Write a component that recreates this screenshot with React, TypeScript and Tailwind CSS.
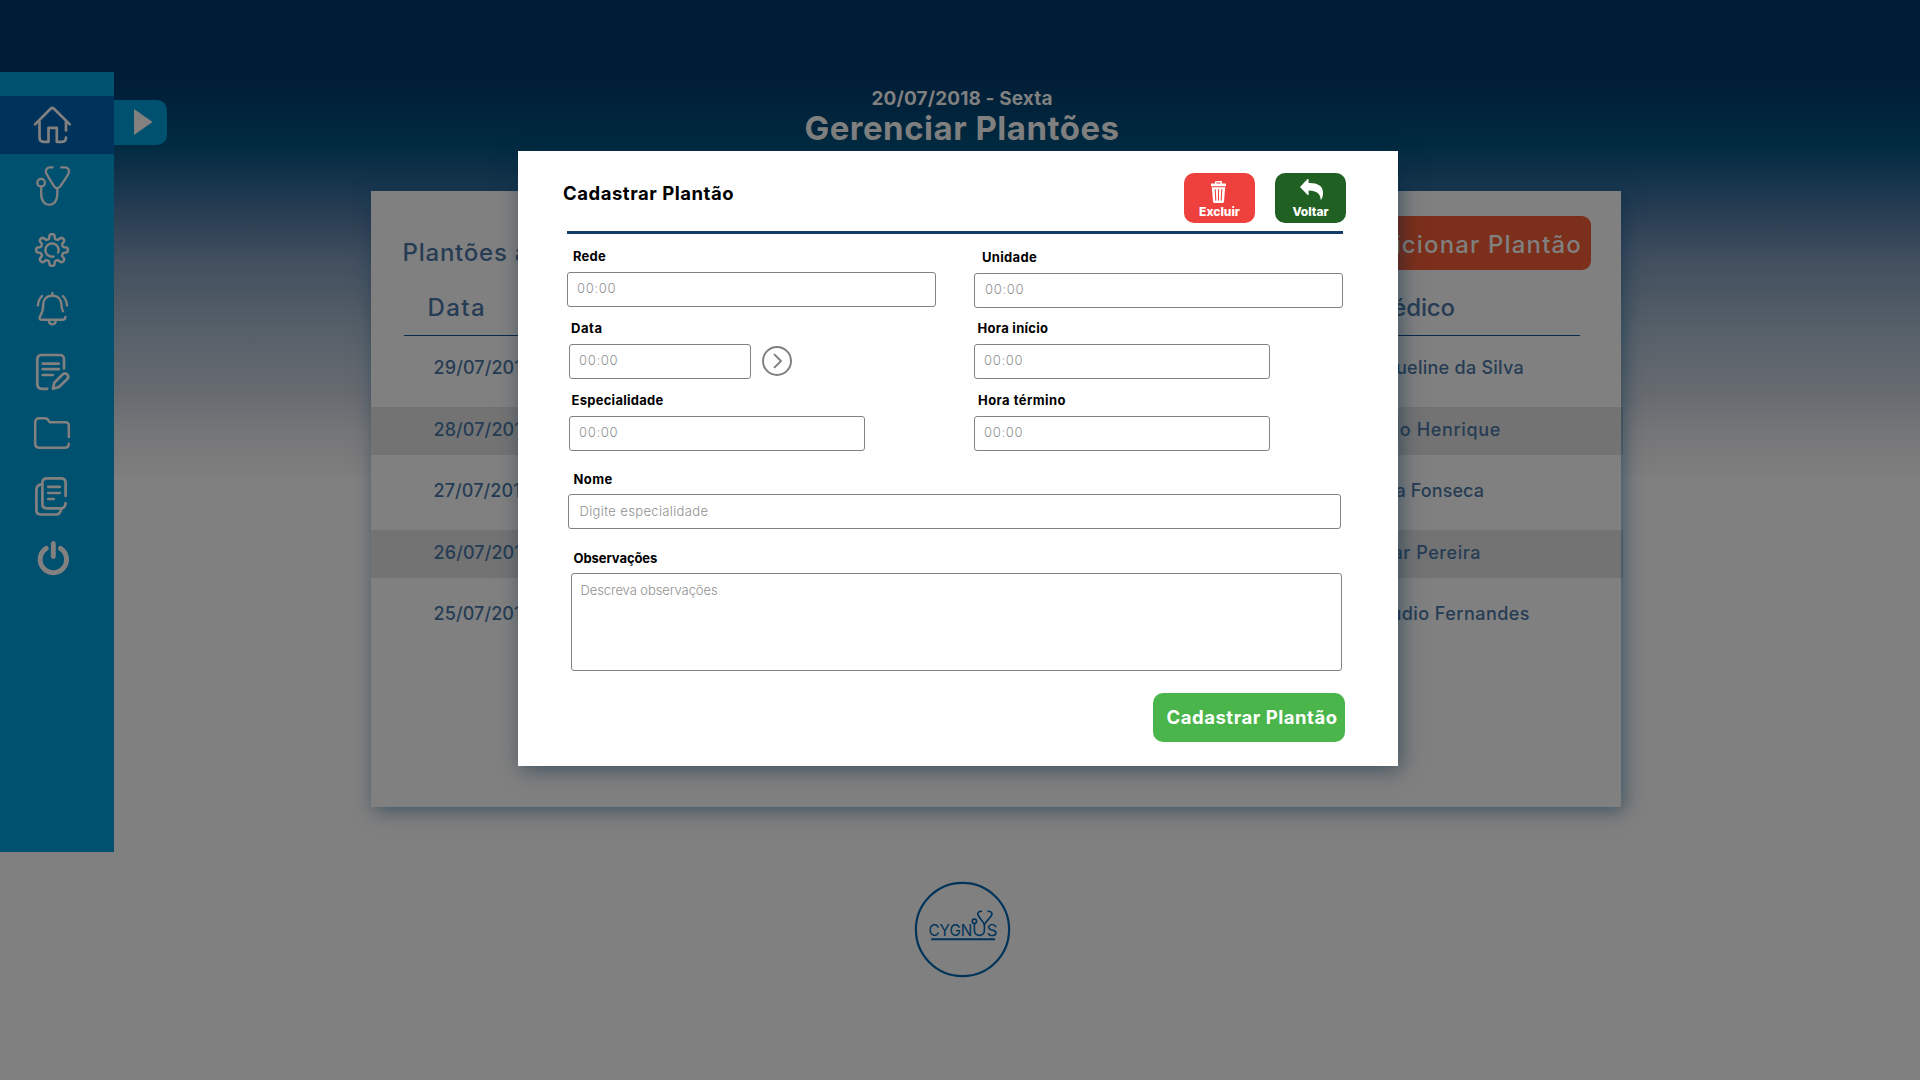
import React from "react";

/* Outline of the eight-toothed gear, centred on (52, 250). */
const gearPath = (() => {
  const pts: string[] = [];
  for (let i = 0; i < 240; i++) {
    const a = (i / 240) * Math.PI * 2;
    const r = 13.6 + 2.3 * Math.tanh(2.2 * Math.cos(8 * a));
    pts.push(`${(52 + r * Math.sin(a)).toFixed(2)} ${(250 - r * Math.cos(a)).toFixed(2)}`);
  }
  return `M${pts.join("L")}Z`;
})();

type NavItem = { id: string; viewBox: string; width: number; paths: string[]; active?: boolean };

const nav: NavItem[] = [
  {
    id: "home",
    viewBox: "32 96 42 58",
    width: 2.7,
    active: true,
    paths: [
      "M35 124.4L50.6 108.8Q52.3 107.2 54 108.8L69.8 124.4",
      "M39.5 122V137.5Q39.5 141.8 43.8 141.8H48.5V127.8H56.8V141.8H62Q66 141.8 66 137.5",
      "M66 122V130.5",
    ],
  },
  {
    id: "stethoscope",
    viewBox: "32 154 42 62",
    width: 2.3,
    paths: [
      "M44.9 182.7A3.8 3.8 0 1 1 37.3 182.7A3.8 3.8 0 1 1 44.9 182.7",
      "M41.2 186.5V194C41.2 208.6 57.3 208.6 57.3 194V188.5",
      "M52.6 167.4H50Q45.4 167.8 46 172.5C46.8 175 51.8 182.6 54.2 186.4Q57.3 190 60.2 186.4C62.8 182.6 68.2 175 68.9 172.5Q69.6 167.8 65 167.4H61.2",
    ],
  },
  {
    id: "settings",
    viewBox: "32 216 42 62",
    width: 2.5,
    paths: [gearPath, "M53.6 256.4A6.6 6.6 0 1 1 58.1 252.4"],
  },
  {
    id: "alerts",
    viewBox: "32 278 42 62",
    width: 2.4,
    paths: [
      "M52.3 293V295.8C46 295.8 43.2 300 43.2 305C43.2 311 41.7 313.8 40 316.6Q38.6 319.8 41.5 319.8H62.3Q65.4 319.8 65.4 317",
      "M52.3 295.8C58.5 295.8 61.4 300 61.4 304.5Q61.4 308.3 63 311.3",
      "M48.9 321Q49.5 324.4 52.3 324.4Q55.2 324.4 55.8 321",
      "M42 296Q38.3 299.6 38 305.5",
      "M62.8 296Q66.6 299.6 66.9 305.5",
    ],
  },
  {
    id: "notes",
    viewBox: "32 340 42 62",
    width: 2.7,
    paths: [
      "M64 368.5V359.6Q64 355 59.5 355H42Q37.3 355 37.3 359.6V384Q37.3 388.8 42 388.8H47.2",
      "M42.7 363.6H58.8M42.7 369.2H58.8M42.7 375H52.8",
      "M53 388.6L54.3 382.8L62.8 374.3Q65.2 372.4 67.3 374.5Q69.2 376.8 67.3 379L58.6 387.2Z",
    ],
  },
  {
    id: "folder",
    viewBox: "32 402 42 62",
    width: 2.5,
    paths: [
      "M68.8 437V425.5Q68.8 422.2 65.5 422.2H50.2Q49 422.2 48.5 420.5Q47.5 418.2 44.5 418.2H39.5Q35.2 418.2 35.2 422.5V443.5Q35.2 447.8 39.5 447.8H64.8Q68.8 447.8 68.8 443.8",
    ],
  },
  {
    id: "files",
    viewBox: "32 464 42 62",
    width: 2.7,
    paths: [
      "M65.6 496V482.8Q65.6 478.4 61 478.4H47Q42.4 478.4 42.4 482.8V504Q42.4 508.4 47 508.4H61Q65.2 508.4 65.6 503.2",
      "M42 484.3Q36.4 484.6 36.4 490V510Q36.4 514.5 41 514.5H56Q60.2 514.5 61 509.5",
      "M48.2 486.8H59.8M48.2 493H59.8M48.2 499H53.8",
    ],
  },
  {
    id: "power",
    viewBox: "32 526 42 62",
    width: 4.9,
    paths: ["M46.2 548.4A13.2 13.2 0 1 0 60.5 548.4", "M53.3 543.4V556.6"],
  },
];

const shifts = [
  { date: "29/07/2018", name: "Jaqueline da Silva", cell: "pr-[99px] tracking-[0.26px]" },
  { date: "28/07/2018", name: "Paulo Henrique", cell: "pr-[122px] tracking-[0.65px]" },
  { date: "27/07/2018", name: "Paula Fonseca", cell: "pr-[139px] tracking-[0.08px]" },
  { date: "26/07/2018", name: "Itamar Pereira", cell: "pr-[142px] tracking-[0.56px]" },
  { date: "25/07/2018", name: "Cláudio Fernandes", cell: "pr-[93px] tracking-[0.46px]" },
];

function Sidebar() {
  return (
    <aside className="mt-[72px] flex h-[780px] w-[114px] shrink-0 flex-col bg-[#005070] pt-6">
      {nav.map((item) => (
        <a key={item.id} className={item.active ? "block h-[58px] bg-[#00335b]" : "block h-[62px]"}>
          <svg
            viewBox={item.viewBox}
            className={item.active ? "ml-8 h-[58px] w-[42px]" : "ml-8 h-[62px] w-[42px]"}
            fill="none"
            stroke="#838080"
            strokeWidth={item.width}
            strokeLinecap="round"
            strokeLinejoin="round"
          >
            {item.paths.map((d) => (
              <path key={d} d={d} />
            ))}
          </svg>
        </a>
      ))}
    </aside>
  );
}

function Field({
  label,
  value,
  className,
  labelClass,
  inputClass,
  children,
}: {
  label: string;
  value: string;
  className: string;
  labelClass: string;
  inputClass: string;
  children?: React.ReactNode;
}) {
  return (
    <div className={className}>
      <div className={`h-5 text-[13px] leading-[19px] font-bold text-black ${labelClass}`}>{label}</div>
      <div className="mt-[5px] flex items-start">
        <div
          className={`flex rounded-[3px] border border-[#828282] text-[13px] leading-4 font-light text-[#8f8f8f] ${inputClass}`}
        >
          {value}
        </div>
        {children}
      </div>
    </div>
  );
}

function Modal() {
  return (
    <section className="absolute top-[151px] left-[518px] flex h-[615px] w-[880px] flex-col bg-white shadow-[3px_4px_20px_rgba(0,38,62,0.5)]">
      <header className="flex h-20 shrink-0 items-start">
        <h2 className="mt-[30px] ml-[45px] text-[18.5px] leading-[25px] font-bold tracking-[0.53px] text-black">
          Cadastrar Plantão
        </h2>
        <div className="mt-[22px] mr-[52px] ml-auto flex gap-5">
          <button className="flex h-[50px] w-[71px] flex-col items-center rounded-[10px] bg-[#ee403d]">
            <svg viewBox="1205 173 30 32" className="h-8 w-[30px]" fill="#fff">
              <path
                fillRule="evenodd"
                d="M1215 183.5V182Q1215 181 1216 181H1221Q1222 181 1222 182V183.5H1226V186.2H1211V183.5ZM1216.4 183.5H1220.6V182.4H1216.4Z"
              />
              <path d="M1211.8 187.2H1225.2L1224 201.4Q1223.8 203 1222.4 203H1214.6Q1213.2 203 1213 201.4Z" />
              <path
                d="M1215.2 189.2L1215.8 200.6M1218.5 189.2V200.6M1221.8 189.2L1221.2 200.6"
                stroke="#ee403d"
                strokeWidth="1.1"
              />
            </svg>
            <span className="text-[12px] leading-[13px] font-extrabold text-white">Excluir</span>
          </button>
          <button className="flex h-[50px] w-[71px] flex-col items-center rounded-[10px] bg-[#216023]">
            <svg viewBox="1296 173 30 32" className="h-8 w-[30px]" fill="#fff">
              <path d="M1300 187L1307.2 179.3Q1308.6 178.2 1308.6 180V183C1318 182.8 1323 186 1323 193C1323 196 1322.2 198.5 1320.8 200C1320.4 194 1317 190.7 1308.6 190.6V194Q1308.6 196 1307.2 194.6Z" />
            </svg>
            <span className="text-[12px] leading-[13px] font-extrabold text-white">Voltar</span>
          </button>
        </div>
      </header>
      <div className="ml-[49px] h-[3px] w-[776px] shrink-0 bg-[#143c66]" />

      <div className="flex">
        <div className="w-[456px] pl-[49px]">
          <Field
            label="Rede"
            value="00:00"
            className="pt-[13px]"
            labelClass="pl-[6px] tracking-[0.23px]"
            inputClass="h-[35px] w-[369px] pt-[7px] pl-[9px] tracking-[0.69px]"
          />
          <Field
            label="Data"
            value="00:00"
            className="pt-3 pl-[2px]"
            labelClass="pl-[2px] tracking-[0.58px]"
            inputClass="h-[35px] w-[182px] pt-[7px] pl-[9px] tracking-[0.69px]"
          >
            <svg
              viewBox="0 0 30 30"
              className="mt-[2px] -mb-1 ml-[11px] size-[30px]"
              fill="none"
              stroke="#808080"
              strokeWidth="2"
              strokeLinecap="round"
              strokeLinejoin="round"
            >
              <circle cx="15" cy="15" r="14" />
              <path d="M12.6 8.6L19 15L12.6 21.4" />
            </svg>
          </Field>
          <Field
            label="Especialidade"
            value="00:00"
            className="pt-3 pl-[2px]"
            labelClass="pl-[2.5px] tracking-[0.27px]"
            inputClass="h-[35px] w-[296px] pt-[7px] pl-[9px] tracking-[0.69px]"
          />
        </div>
        <div>
          <Field
            label="Unidade"
            value="00:00"
            className="pt-[14px]"
            labelClass="pl-[8px] tracking-[0.32px]"
            inputClass="h-[35px] w-[369px] pt-[7px] pl-[10px] tracking-[0.69px]"
          />
          <Field
            label="Hora início"
            value="00:00"
            className="pt-[11px]"
            labelClass="pl-[3.5px] tracking-[0.28px]"
            inputClass="h-[35px] w-[296px] pt-[7px] pl-[9px] tracking-[0.69px]"
          />
          <Field
            label="Hora término"
            value="00:00"
            className="pt-3"
            labelClass="pl-[4px] tracking-[0.44px]"
            inputClass="h-[35px] w-[296px] pt-[7px] pl-[9px] tracking-[0.69px]"
          />
        </div>
      </div>
      <Field
        label="Nome"
        value="Digite especialidade"
        className="pt-[18px] pl-[50px]"
        labelClass="pl-[5.5px] pt-px tracking-[0.42px]"
        inputClass="h-[35px] w-[773px] pt-2 pl-[10.5px] tracking-[0.36px]"
      />
      <Field
        label="Observações"
        value="Descreva observações"
        className="pt-[19px] pl-[53px]"
        labelClass="pl-[2.5px] pt-px tracking-[-0.08px]"
        inputClass="h-[98px] w-[771px] pt-2 pl-[8.5px] tracking-[-0.08px]"
      />
      <button className="mt-[22px] mr-[53px] flex h-[49px] w-[192px] items-center self-end rounded-[10px] bg-[#4ab54b] pt-px pl-[13.5px] text-[18.5px] font-bold tracking-[0.53px] whitespace-nowrap text-white">
        Cadastrar Plantão
      </button>
    </section>
  );
}

export default function App() {
  return (
    <div className="relative flex h-[1080px] w-[1920px] overflow-hidden bg-[#808080] bg-[linear-gradient(to_bottom,#001c37_0px,#001d37_80px,#00233b_110px,#002a40_145px,#0c2f46_165px,#1b3850_193px,#2d4054_220px,#414f5f_260px,#4b5762_293px,#566069_330px,#676b70_395px,#747577_430px,#7e7e7e_475px,#808080_476px)] font-['Inter',sans-serif]">
      <Sidebar />
      <button className="mt-[100px] flex h-[45px] w-[53px] shrink-0 items-center rounded-r-[10px] bg-[#005070] pl-5">
        <svg viewBox="0 0 19 26" className="mb-px h-[26px] w-[19px]" fill="#838080">
          <path d="M0 0L18.6 13L0 26Z" />
        </svg>
      </button>

      <main className="ml-[204px] w-[1252px]">
        <header className="h-[191px] w-[1182px] pt-[86px] text-center font-bold text-[#808080]">
          <p className="text-[19px] leading-[25px] tracking-[0.12px]">20/07/2018 - Sexta</p>
          <h1 className="text-[33px] leading-[34px] tracking-[0.5px]">Gerenciar Plantões</h1>
        </header>

        <section className="h-[616px] w-[1250px] bg-[#808080] pt-[25px] text-[#263c54] shadow-[3px_4px_18px_rgba(0,42,72,0.5)]">
          <div className="flex h-[54px] justify-between pr-[30px] pl-[31.5px]">
            <h2 className="mt-[25px] text-[24px] leading-6 font-medium tracking-[0.77px]">
              Plantões abertos
            </h2>
            <button className="flex h-[54px] w-[266px] items-center justify-end rounded-[9px] bg-[#7c2f1a] pt-[3px] pr-[9px] text-[24px] font-medium tracking-[1.15px] text-[#808080]">
              Adicionar Plantão
            </button>
          </div>
          <div className="mr-[41px] ml-[33px] flex h-[66px] items-center justify-between border-b border-[#0a2848] pt-[11px] pr-[125px] pl-[23.5px] text-[24px] font-medium">
            <span className="tracking-[1.4px]">Data</span>
            <span className="tracking-[-0.1px]">Médico</span>
          </div>
          <div className="mt-[9.5px] flex w-[1252px] flex-col gap-[13.5px]">
            {shifts.map((s, i) => (
              <div
                key={s.date}
                className={`flex h-12 items-center justify-between pb-[3.5px] pl-[62.5px] text-[18px] font-medium ${
                  i % 2 ? "bg-black/10" : ""
                }`}
              >
                <span className="tracking-[0.1px]">{s.date}</span>
                <span className={s.cell}>{s.name}</span>
              </div>
            ))}
          </div>
        </section>

        <footer className="flex w-[1182px] justify-center pt-[73px]">
          <svg
            viewBox="912 880 100 100"
            className="size-[100px]"
            fill="none"
            stroke="#00345a"
            strokeLinecap="round"
            strokeLinejoin="round"
          >
            <circle cx="962.5" cy="929.5" r="46.6" strokeWidth="2.2" />
            <g className="font-['Inter',sans-serif] text-[16px] font-normal" fill="#00345a" stroke="none">
              <text x="928.4" y="935.6" textLength="44" lengthAdjust="spacingAndGlyphs">
                CYGN
              </text>
              <text x="986.6" y="935.6" textLength="11" lengthAdjust="spacingAndGlyphs">
                S
              </text>
            </g>
            <path d="M931.2 939.2H995" strokeWidth="2" strokeLinecap="butt" />
            <g strokeWidth="1.6">
              <circle cx="974.4" cy="921.3" r="2.2" />
              <path d="M974.4 923.6V930.5C974.4 937 984.4 937 984.4 930.5V925C984.4 922.5 978.6 917.5 977.8 914.2Q977.6 911.3 981.4 911.2" />
              <path d="M984.4 925C984.4 922.5 991.2 917.5 992 914.2Q992 911.3 988 911.2" />
            </g>
          </svg>
        </footer>
      </main>

      <Modal />
    </div>
  );
}
